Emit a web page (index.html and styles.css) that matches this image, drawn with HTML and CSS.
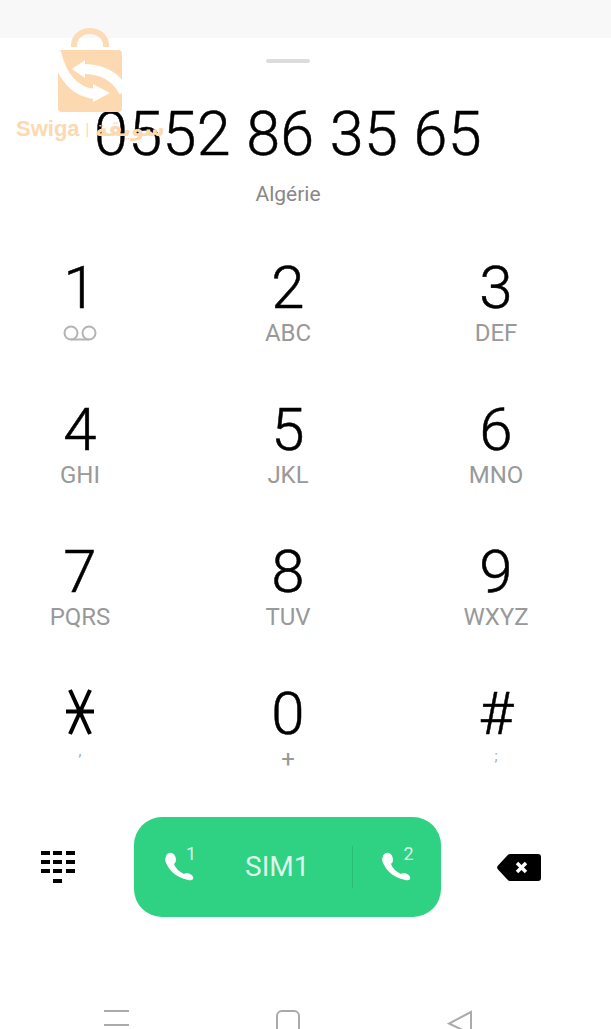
FILE: index.html
```html
<!DOCTYPE html>
<html lang="fr">
<head>
<meta charset="utf-8">
<title>Clavier</title>
<link rel="stylesheet" href="styles.css">
</head>
<body>
<div class="status-strip"></div>
<main class="dialer">
  <div class="handle"></div>
  <div class="number">0552 86 35 65</div>
  <div class="region">Algérie</div>
  <section class="keys">
    <div class="key"><span class="digit">1</span><svg class="voicemail" viewBox="0 0 36 16"><path d="M9 14.500h18" /><circle cx="9" cy="8" r="6.500" /><circle cx="27" cy="8" r="6.500" /></svg></div>
    <div class="key"><span class="digit">2</span><span class="letters">ABC</span></div>
    <div class="key"><span class="digit">3</span><span class="letters">DEF</span></div>
    <div class="key"><span class="digit">4</span><span class="letters">GHI</span></div>
    <div class="key"><span class="digit">5</span><span class="letters">JKL</span></div>
    <div class="key"><span class="digit">6</span><span class="letters">MNO</span></div>
    <div class="key"><span class="digit">7</span><span class="letters">PQRS</span></div>
    <div class="key"><span class="digit">8</span><span class="letters">TUV</span></div>
    <div class="key"><span class="digit">9</span><span class="letters">WXYZ</span></div>
    <div class="key"><svg class="star" viewBox="0 0 30 46"><path d="M5 1l20 44M25 1L5 45M1 22.500h28" /></svg><span class="letters small">,</span></div>
    <div class="key"><span class="digit">0</span><span class="letters">+</span></div>
    <div class="key"><span class="digit">#</span><span class="letters small">;</span></div>
  </section>
  <section class="actions">
    <svg class="keypad" viewBox="0 0 34 33"><path d="M0 0h9v4H0zM12 0h9v4h-9zM25 0h9v4h-9zM0 9h9v4H0zM12 9h9v4h-9zM25 9h9v4h-9zM0 18h9v4H0zM12 18h9v4h-9zM25 18h9v4h-9zM12 28h9v4h-9z" /></svg>
    <div class="call">
      <div class="sim-icon">
        <svg class="phone" viewBox="0 0 30 30"><path d="M2 4Q4 0 8 1Q11 2 12 7Q12.500 10 10 12Q12 18 20 22Q23 20 26 22Q30 24 29 27Q28 29 24 28Q6 24 1 8Z" /></svg>
        <span class="sim-num">1</span>
      </div>
      <span class="sim-label">SIM1</span>
      <span class="divider"></span>
      <div class="sim-icon">
        <svg class="phone" viewBox="0 0 30 30"><path d="M2 4Q4 0 8 1Q11 2 12 7Q12.500 10 10 12Q12 18 20 22Q23 20 26 22Q30 24 29 27Q28 29 24 28Q6 24 1 8Z" /></svg>
        <span class="sim-num">2</span>
      </div>
    </div>
    <svg class="backspace" viewBox="0 0 44 27"><path class="bs-body" d="M13 0h28a3 3 0 0 1 3 3v21a3 3 0 0 1-3 3H13a3 3 0 0 1-2.200-1L1 15.500a3 3 0 0 1 0-4L10.800 1A3 3 0 0 1 13 0z" /><path class="bs-x" d="M20 9l9 9M29 9l-9 9" /></svg>
  </section>
</main>
<nav class="nav">
  <span class="nav-menu"></span>
  <span class="nav-home"></span>
  <svg class="nav-back" viewBox="0 0 26 26"><path d="M24 2v22L2 13.500 24 2z" /></svg>
</nav>
<aside class="watermark">
  <svg class="wm-bag" viewBox="0 0 64 84">
    <path class="wm-handle" d="M16 19v-2a16 14 0 0 1 32 0v2" />
    <rect class="wm-fill" x="0" y="22" width="64" height="62" rx="4" />
    <path class="wm-cut" d="M25 41C44 41 58 48 66 64" />
    <path class="wm-head" d="M14 41L27 32V50Z" />
    <path class="wm-cut" d="M37 66C18 64 4 50 -2 24" />
    <path class="wm-head" d="M52 65L35 56V74Z" />
  </svg>
  <div class="wm-text"><span>Swiga</span><span class="wm-sep">|</span><span class="wm-ar" dir="rtl" lang="ar">سويقة</span></div>
</aside>
</body>
</html>
```
FILE: styles.css
```css
* { box-sizing: border-box; }
html, body { margin: 0; padding: 0; }
body {
  position: relative;
  width: 611px;
  height: 1029px;
  overflow: hidden;
  background: #fff;
  font-family: Roboto, "Liberation Sans", sans-serif;
}
.status-strip { height: 38px; background: #f8f8f8; }
.dialer {
  width: 576px;
  display: flex;
  flex-direction: column;
  align-items: center;
}
.handle {
  width: 44px;
  height: 4px;
  margin-top: 21px;
  border-radius: 2px;
  background: #dcdcdc;
}
.number {
  margin-top: 33px;
  font-size: 61px;
  font-weight: 300;
  line-height: 76px;
  letter-spacing: 0.4px;
  -webkit-text-stroke: 0.5px #000;
  color: #000;
  white-space: nowrap;
}
.region {
  margin-top: 8px;
  font-size: 21px;
  line-height: 28px;
  color: #888;
}
.keys {
  width: 576px;
  margin-top: 47px;
  display: grid;
  grid-template-columns: repeat(3, 160px);
  grid-auto-rows: 142px;
  column-gap: 48px;
}
.key {
  display: flex;
  flex-direction: column;
  align-items: center;
}
.digit {
  height: 60px;
  margin-top: 3px;
  font-size: 60px;
  font-weight: 300;
  line-height: 60px;
  -webkit-text-stroke: 0.5px #000;
  color: #000;
}
.letters {
  font-size: 24px;
  line-height: 30px;
  color: #999;
}
.letters.small { font-size: 15px; line-height: 24px; color: #aaa; }
.voicemail {
  width: 36px;
  height: 16px;
  margin-top: 7px;
  fill: none;
  stroke: #b4b4b4;
  stroke-width: 2;
}
.star {
  width: 30px;
  height: 46px;
  margin-top: 8px;
  margin-bottom: 4px;
  fill: none;
  stroke: #000;
  stroke-width: 4;
}
.actions {
  width: 576px;
  height: 100px;
  margin-top: -6px;
  padding-left: 6px;
  display: flex;
  align-items: center;
  justify-content: center;
}
.keypad { width: 34px; height: 33px; margin: 0 59px 0 0; fill: #000; }
.call {
  width: 307px;
  height: 100px;
  border-radius: 28px;
  background: #2fd183;
  display: flex;
  align-items: center;
  color: #dcf6e9;
  padding-left: 30px;
}
.sim-icon { position: relative; width: 32px; height: 36px; }
.phone { position: absolute; left: 0; top: 3px; width: 30px; height: 30px; fill: #fff; }
.sim-num {
  position: absolute;
  left: 22px;
  top: -5px;
  font-size: 18px;
  line-height: 20px;
  color: #dcf6e9;
}
.sim-label { margin-left: 49px; font-size: 28px; line-height: 34px; }
.divider { width: 1px; height: 42px; margin: 0 28px 0 43px; background: #29bd75; }
.backspace { width: 44px; height: 27px; margin-left: 56px; }
.bs-body { fill: #000; }
.bs-x { fill: none; stroke: #fff; stroke-width: 3.500; }
.nav {
  position: absolute;
  left: 0;
  right: 0;
  top: 1010px;
  display: flex;
  padding-left: 104px;
}
.nav-menu {
  width: 25px;
  height: 16px;
  border-top: 2px solid #aaa;
  border-bottom: 2px solid #aaa;
}
.nav-home {
  width: 24px;
  height: 30px;
  margin-left: 147px;
  border: 2px solid #aaa;
  border-radius: 6px;
}
.nav-back { width: 26px; height: 26px; margin-left: 147px; fill: none; stroke: #aaa; stroke-width: 2; }
.watermark {
  position: absolute;
  left: 16px;
  top: 28px;
  width: 150px;
}
.wm-bag { display: block; width: 64px; height: 84px; margin-left: 42px; }
.wm-handle { fill: none; stroke: #fcdcb6; stroke-width: 6; }
.wm-fill { fill: #fcd9b0; }
.wm-cut { fill: none; stroke: #fff; stroke-width: 10; }
.wm-head { fill: #fff; }
.wm-text {
  display: flex;
  align-items: center;
  gap: 6px;
  margin-top: 4px;
  font-family: "Liberation Sans", sans-serif;
  font-size: 22px;
  font-weight: 700;
  line-height: 26px;
  color: #fcd9b0;
  white-space: nowrap;
}
.wm-sep { font-size: 14px; font-weight: 400; }
.wm-ar { font-family: "DejaVu Sans", sans-serif; font-size: 21px; }
```
